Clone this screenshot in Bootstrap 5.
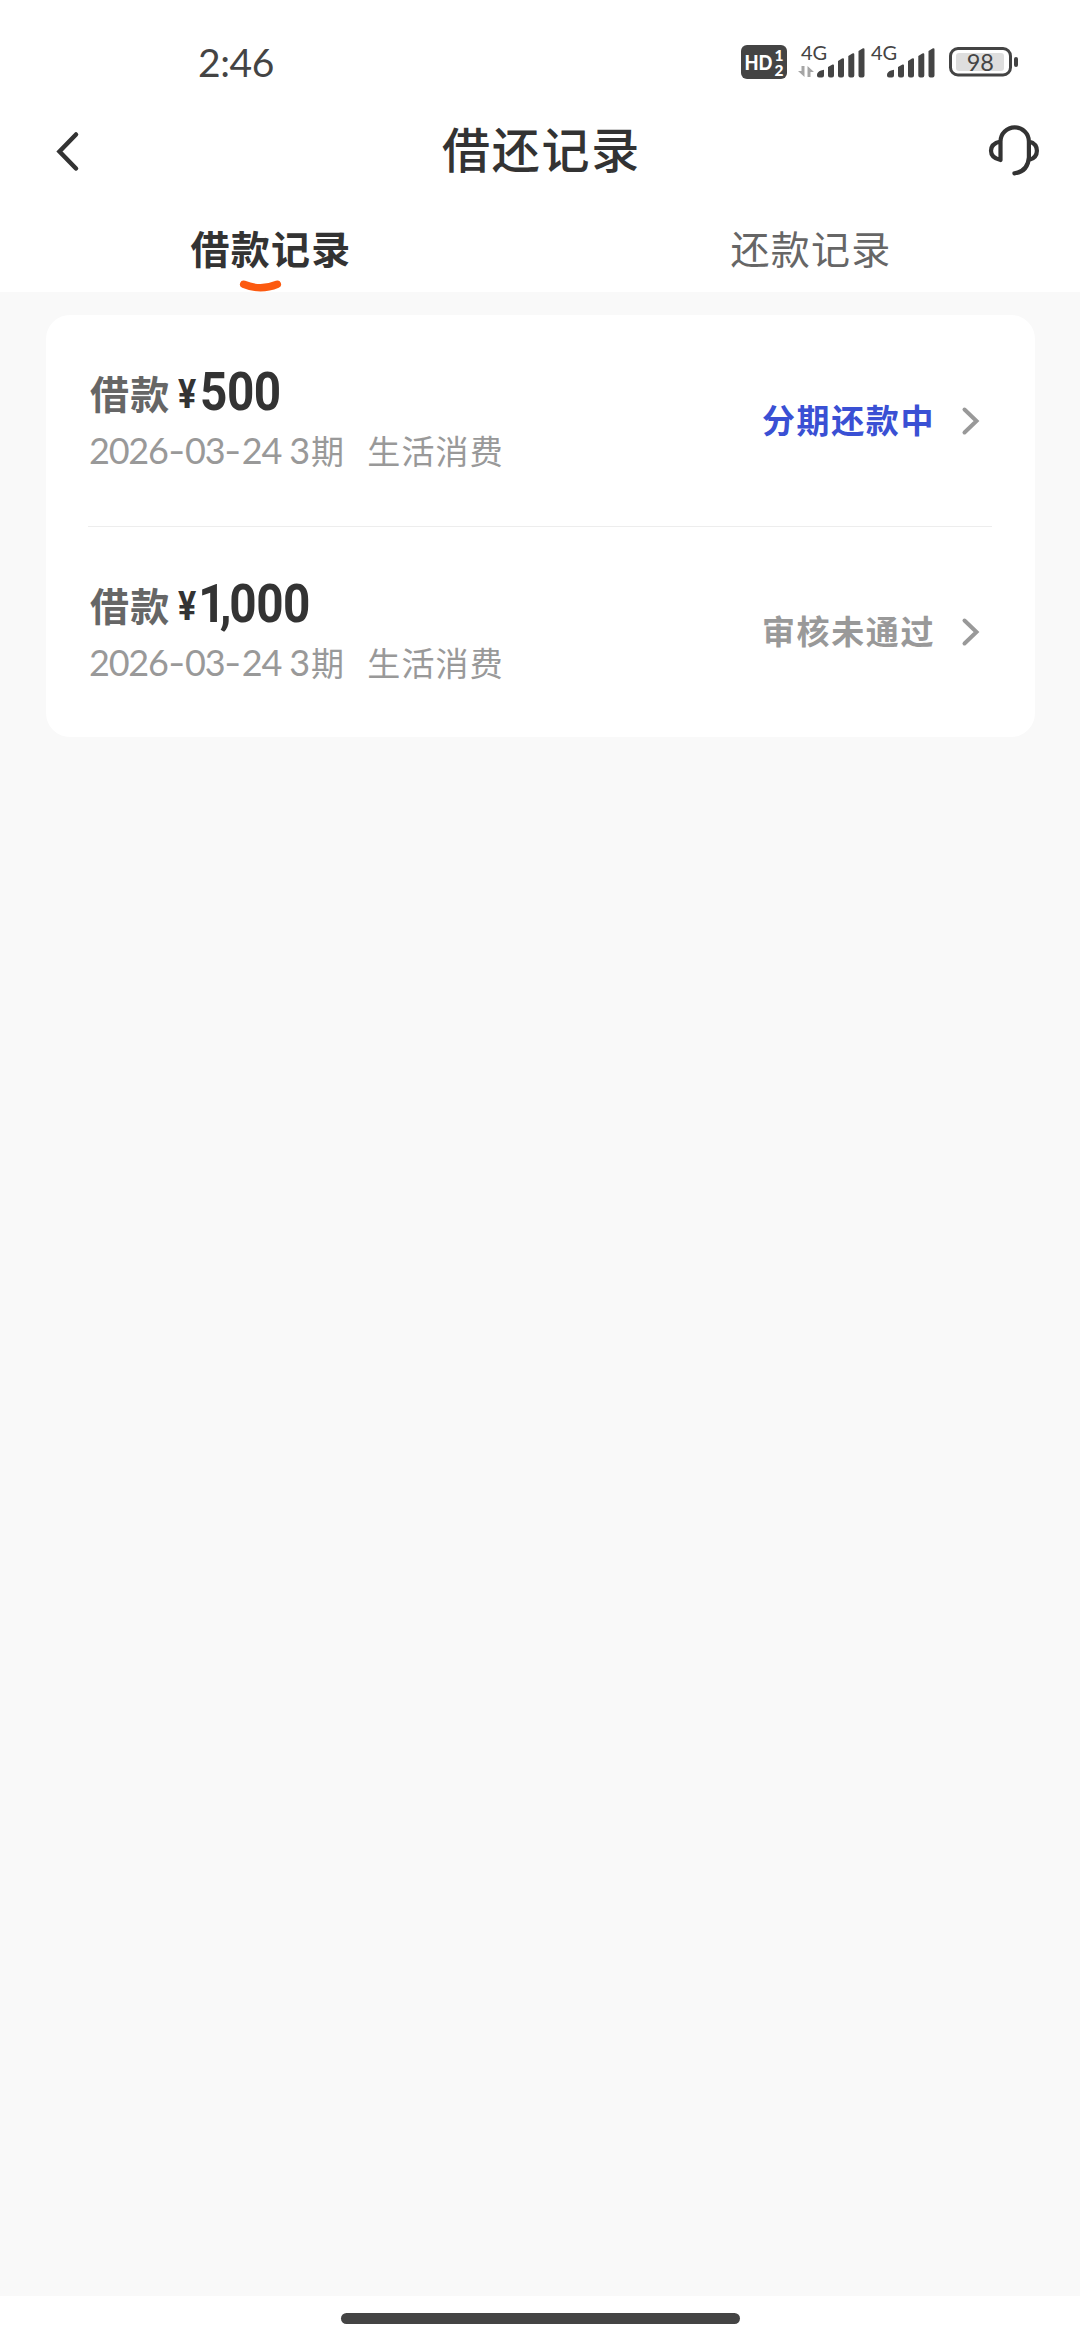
<!DOCTYPE html>
<html lang="zh-CN">
<head>
<meta charset="utf-8">
<meta name="viewport" content="width=device-width, initial-scale=1">
<title>借还记录</title>
<link href="https://cdn.jsdelivr.net/npm/bootstrap@5.3.0/dist/css/bootstrap.min.css" rel="stylesheet">
<style>
body { font-family: "Noto Sans CJK SC", sans-serif; color: #333; background: #fff; line-height: 1; }
.phone { width: 1080px; height: 2340px; overflow: hidden; }
.statusbar { height: 84px; padding: 40px 60px 0 198px; }
.clock { font: 400 39px/44px Lato, sans-serif; color: #444; letter-spacing: -.4px; }
.topbar { height: 134px; padding: 0 38px 0 54px; }
.page-title { font-size: 48px; line-height: 60px; font-weight: 500; letter-spacing: 1.8px; margin: -9px 13px 0 0; }
.tabs { height: 74px; }
.tab-item { font-size: 39px; line-height: 56px; letter-spacing: 1.3px; color: #666; border: 0; background: none; padding: 1px 0 17px 2px; }
.tab-item.active { color: #333; font-weight: 700; }
.smile { bottom: 0; left: 50%; margin-left: -31px; }
.content-area { background: #f9f9f9; padding: 23px 45px 0 46px; }
.loan-card { border: 0; border-radius: 24px; padding: 0 43px 0 42px; }
.loan { height: 211px; padding: 0 10px 0 2px; background: none; border: 0; border-radius: 0; }
.loan + .loan { border-top: 1px solid #ededed; }
.loan-title { margin-top: -3px; }
.loan-name { font-size: 39px; line-height: 56px; font-weight: 700; color: #666; letter-spacing: 1.2px; }
.yen { font: 700 40px/62px Roboto, sans-serif; color: #333; display: inline-block; width: 22px; height: 56px; transform: scaleX(.85); transform-origin: left; margin-left: 8px; }
.amount { font: 700 53px/57px Roboto, sans-serif; height: 56px; letter-spacing: -.5px; color: #333; display: inline-block; transform: scaleX(.9); transform-origin: left; }
.thousand { letter-spacing: -6.5px; margin-left: -2px; }
.thousand-sep { letter-spacing: -2.5px; }
.meta { font-size: 33px; line-height: 48px; letter-spacing: 1.2px; color: #999; margin-top: 6px; white-space: nowrap; }
.date { font-family: Lato, sans-serif; font-size: 36px; letter-spacing: -1.2px; width: 222px; margin-left: -1px; }
.dash { display: inline-block; transform: scaleX(1.3); letter-spacing: 0; margin: 0 2px; }
.purpose { margin-left: 22px; }
.state { font-size: 33px; line-height: 48px; font-weight: 700; letter-spacing: 1.6px; color: #999; margin-top: -4px; }
.state-active { color: #3a50d4; }
.chev { margin-left: 23px; }
.homebar { height: 44px; padding-top: 17px; }
.homebar div { width: 399px; height: 11px; border-radius: 6px; background: #444; }
svg text { font-family: Lato, sans-serif; }
</style>
<script src="https://cdn.jsdelivr.net/npm/bootstrap@5.3.0/dist/js/bootstrap.bundle.min.js"></script>
</head>
<body>
<div class="phone d-flex flex-column">
  <header class="statusbar d-flex justify-content-between flex-shrink-0">
    <span class="clock">2:46</span>
    <svg width="280" height="44" viewBox="740 40 280 44" fill="#444">
      <rect x="741" y="45" width="46" height="34" rx="6"/>
      <g fill="#fff" font-weight="900">
        <text x="744.500" y="70" font-size="20.500" textLength="28" lengthAdjust="spacingAndGlyphs">HD</text>
        <text x="774.500" y="60.500" font-size="15.500">1</text>
        <text x="774.500" y="75.500" font-size="15.500">2</text>
      </g>
      <text x="801" y="60" font-size="20" textLength="26">4G</text>
      <text x="871" y="60" font-size="20" textLength="26">4G</text>
      <path fill="#a5a5a5" d="M801.500 66h3v11l-6.500-6h3.500zM810.500 77h-3V66l6.500 6h-3.500z"/>
      <g id="signal">
        <path d="M817 75q0-3 4-4.500l3-.800v5.800q0 2-2 2h-3q-2 0-2-2zM828 67l4.500-2.500q1.500-.500 1.500 1v10q0 2-2 2h-2q-2 0-2-2zM838 61l4-2.500q2-1 2 1v16q0 2-2 2h-2q-2 0-2-2zM848.300 56l4-2.500q2-1 2 1v21q0 2-2 2h-2q-2 0-2-2zM858.500 51l4-2.500q2-1 2 1v26q0 2-2 2h-2q-2 0-2-2z"/>
      </g>
      <use href="#signal" x="70"/>
      <rect x="950.500" y="48.500" width="60" height="26.500" rx="7.500" fill="none" stroke="#444" stroke-width="3"/>
      <rect x="956" y="53" width="48" height="18" rx="3" fill="#dedede"/>
      <rect x="1014" y="57" width="4" height="10" rx="2"/>
      <text x="980.300" y="70.500" font-size="23.500" text-anchor="middle">98</text>
    </svg>
  </header>

  <nav class="topbar d-flex align-items-center justify-content-between flex-shrink-0">
    <svg width="54" height="52" viewBox="54 125 54 52" fill="none" stroke="#333" stroke-width="4.500" stroke-linecap="round" stroke-linejoin="miter"><path d="M76 134.500L59.500 151.500L76 168.500"/></svg>
    <h1 class="page-title">借还记录</h1>
    <svg width="54" height="52" viewBox="988 125 54 52" fill="none" stroke="#333" stroke-width="4.200" stroke-linecap="round" stroke-linejoin="round"><path d="M1000.500 160V141.500a14.200 14.200 0 0 1 28.400 0V157.500q-1 14-14.500 15.800M1000.500 141.500q-9.500 2-9.500 9.300t9.500 9.200M1028.900 141.500q8 2 8 9.300t-8 9.200"/></svg>
  </nav>

  <div class="tabs row g-0 flex-shrink-0">
    <div class="col-6 d-flex justify-content-center position-relative">
      <button class="tab-item active">借款记录</button>
      <svg class="smile position-absolute" width="43" height="13" viewBox="239 279 43 13" fill="none" stroke="#fc5a10" stroke-width="7.500" stroke-linecap="round"><path d="M243.700 284.300Q260.500 291.300 277.300 284.300"/></svg>
    </div>
    <div class="col-6 d-flex justify-content-center"><button class="tab-item">还款记录</button></div>
  </div>

  <main class="content-area flex-grow-1">
    <div class="loan-card card">
      <div class="loan d-flex align-items-center justify-content-between">
        <div>
          <div class="loan-title d-flex"><span class="loan-name">借款</span><span class="yen">¥</span><span class="amount">500</span></div>
          <div class="meta d-flex"><span class="date">2026<span class="dash">-</span>03<span class="dash">-</span>24 3</span><span>期</span><span class="purpose">生活消费</span></div>
        </div>
        <div class="d-flex align-items-center">
          <span class="state state-active">分期还款中</span>
          <svg class="chev" width="24" height="32" viewBox="957 405 24 32" fill="none" stroke="#999" stroke-width="4" stroke-linecap="round"><path d="M963.500 409.500L975.500 421L963.500 432.500"/></svg>
        </div>
      </div>
      <div class="loan d-flex align-items-center justify-content-between">
        <div>
          <div class="loan-title d-flex"><span class="loan-name">借款</span><span class="yen">¥</span><span class="amount"><span class="thousand">1</span><span class="thousand-sep">,</span>000</span></div>
          <div class="meta d-flex"><span class="date">2026<span class="dash">-</span>03<span class="dash">-</span>24 3</span><span>期</span><span class="purpose">生活消费</span></div>
        </div>
        <div class="d-flex align-items-center">
          <span class="state">审核未通过</span>
          <svg class="chev" width="24" height="32" viewBox="957 405 24 32" fill="none" stroke="#999" stroke-width="4" stroke-linecap="round"><path d="M963.500 409.500L975.500 421L963.500 432.500"/></svg>
        </div>
      </div>
    </div>
  </main>
  <footer class="homebar d-flex justify-content-center flex-shrink-0"><div></div></footer>
</div>
</body>
</html>
